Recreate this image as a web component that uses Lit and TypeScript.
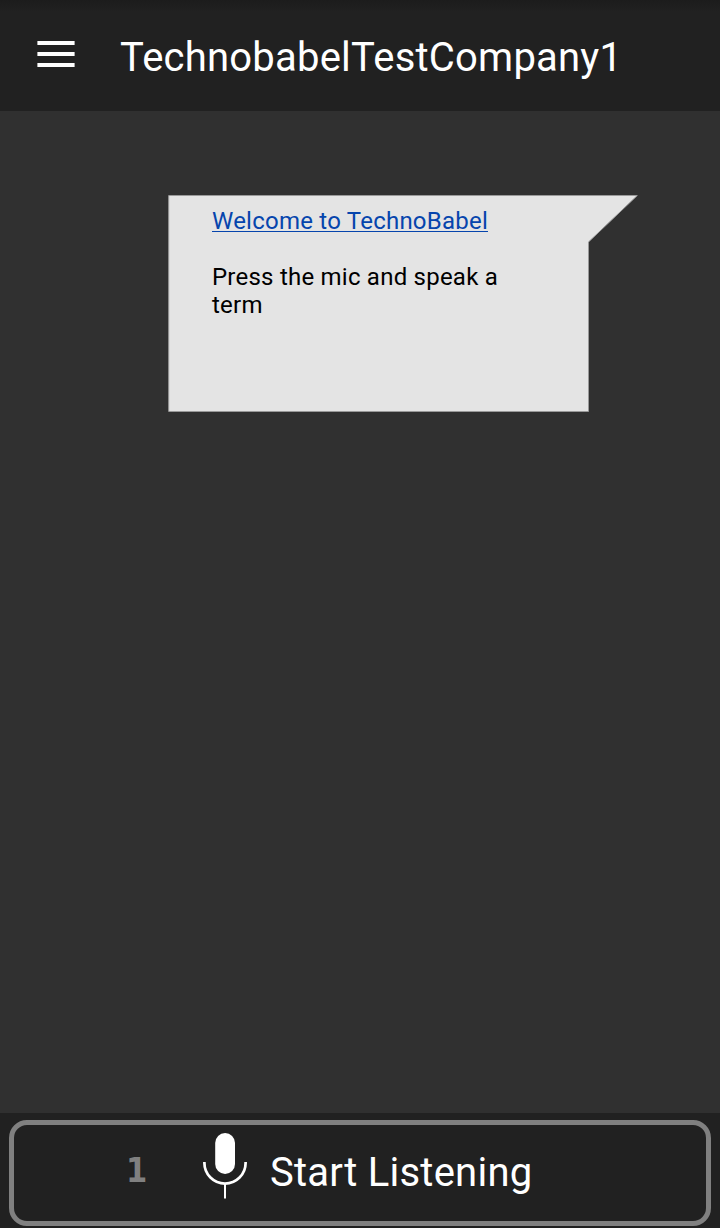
import { LitElement, html, css } from "lit";
import { customElement, property } from "lit/decorators.js";

@customElement("app-header")
class AppHeader extends LitElement {
  @property() heading = "";

  static styles = css`
    :host {
      display: flex;
      height: 111px;
      box-sizing: border-box;
      padding-left: 37px;
      background: linear-gradient(#1c1c1c, #212121 12px);
      color: #fff;
    }
    .menu {
      flex: none;
      width: 38px;
      height: 26px;
      margin: 41px 45px 0 0;
    }
    .title {
      margin: 34px 0 0;
      font-size: 40px;
      line-height: 48px;
      font-weight: 400;
      white-space: nowrap;
      letter-spacing: 0.22px;
    }
  `;

  render() {
    return html`
      <svg class="menu" viewBox="0 0 38 26" fill="currentColor">
        <path d="M.4 0h37.2v4H.4zM.4 11h37.2v4H.4zM.4 22h37.2v4H.4z" />
      </svg>
      <h1 class="title">${this.heading}</h1>
    `;
  }
}

@customElement("speech-bubble")
class SpeechBubble extends LitElement {
  static styles = css`
    :host {
      display: grid;
      width: 470px;
      height: 217px;
      font-size: 24px;
      line-height: 28px;
      color: #000;
    }
    .shape,
    .body {
      grid-area: 1 / 1;
    }
    .body {
      width: 320px;
      padding: 12px 0 0 44px;
      letter-spacing: 0.23px;
    }
    .link {
      display: block;
      margin-bottom: 28px;
      color: #0645ad;
      text-underline-offset: 2px;
      text-decoration: underline 1px;
    }
    .text {
      margin: 0;
    }
  `;

  render() {
    return html`
      <svg class="shape" width="470" height="217" viewBox="0 0 470 217">
        <path d="M.7 .5H469.3L420.5 47V216.5H.7z" fill="#e4e4e4" stroke="#999" stroke-width="1" stroke-linejoin="bevel" />
      </svg>
      <div class="body">
        <a class="link">Welcome to TechnoBabel</a>
        <p class="text">Press the mic and speak a term</p>
      </div>
    `;
  }
}

@customElement("listen-bar")
class ListenBar extends LitElement {
  @property({ type: Number }) count = 0;

  static styles = css`
    :host {
      display: block;
      height: 115px;
      box-sizing: border-box;
      padding: 7px 9px 2px;
      background: #212121;
    }
    .button {
      display: flex;
      width: 100%;
      height: 106px;
      box-sizing: border-box;
      padding: 0 0 0 112px;
      border: 5px solid #808080;
      border-radius: 18px;
      background: #212121;
      color: #fff;
      font: inherit;
      text-align: left;
    }
    .count {
      width: 76px;
      margin-top: 24px;
      font-family: "DejaVu Sans Condensed", "DejaVu Sans", sans-serif;
      font-stretch: condensed;
      font-weight: 700;
      font-size: 34px;
      line-height: 42px;
      color: #808080;
    }
    .mic {
      flex: none;
      width: 46px;
      height: 68px;
      margin-top: 7px;
    }
    .label {
      margin: 24px 0 0 22px;
      font-size: 40px;
      line-height: 48px;
      letter-spacing: 0.25px;
      white-space: nowrap;
    }
  `;

  render() {
    return html`
      <button class="button">
        <span class="count">${this.count}</span>
        <svg class="mic" viewBox="0 0 46 68" fill="none" stroke="#fff" stroke-width="2.7">
          <rect x="13.2" y="1" width="19.8" height="41" rx="9.9" fill="#fff" stroke="none" />
          <path d="M2.4 30V31A20.6 20.6 0 0 0 43.6 31V30" />
          <path d="M23 52V66.5" stroke-width="2" />
        </svg>
        <span class="label">Start Listening</span>
      </button>
    `;
  }
}

@customElement("app-root")
class AppRoot extends LitElement {
  static styles = css`
    :host {
      display: flex;
      flex-direction: column;
      height: 1228px;
      background: #303030;
      font-family: Roboto, sans-serif;
    }
    .content {
      flex: 1;
      padding: 84px 0 0 168px;
    }
  `;

  render() {
    return html`
      <app-header heading="TechnobabelTestCompany1"></app-header>
      <main class="content"><speech-bubble></speech-bubble></main>
      <listen-bar .count=${1}></listen-bar>
    `;
  }
}
